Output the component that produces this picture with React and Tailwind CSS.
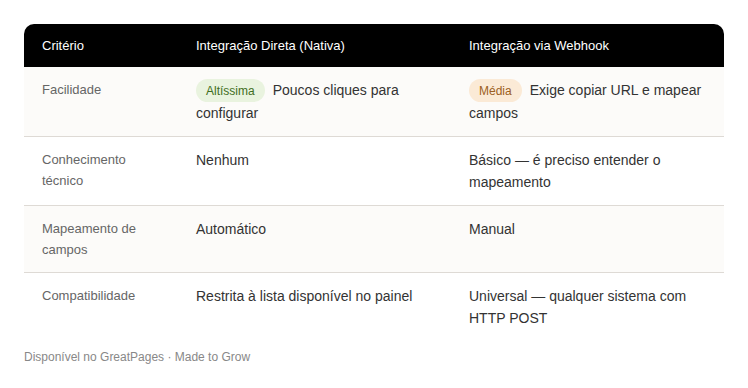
import React from "react";

const rows = [
  {
    label: "Facilidade",
    direct: { badge: "Altíssima", tone: "green", text: "Poucos cliques para configurar" },
    webhook: { badge: "Média", tone: "amber", text: "Exige copiar URL e mapear campos" },
  },
  { label: "Conhecimento técnico", direct: { text: "Nenhum" }, webhook: { text: "Básico — é preciso entender o mapeamento" } },
  { label: "Mapeamento de campos", direct: { text: "Automático" }, webhook: { text: "Manual" } },
  { label: "Compatibilidade", direct: { text: "Restrita à lista disponível no painel" }, webhook: { text: "Universal — qualquer sistema com HTTP POST" } },
];

function Badge({ tone, children }) {
  const cls =
    tone === "green"
      ? "bg-[#e9f3df] text-[#3f6e22]"
      : "bg-[#fbead6] text-[#9c5f22]";
  return (
    <span className={`mr-2 inline-block rounded-full px-[10px] pt-[2px] pb-px text-[12px] leading-[20px] align-top ${cls}`}>
      {children}
    </span>
  );
}

function Cell({ value }) {
  return (
    <div className="px-[18px] py-3 text-[14px] leading-[22px] text-[#333333]">
      {value.badge && <Badge tone={value.tone}>{value.badge}</Badge>}
      {value.text}
    </div>
  );
}

export default function App() {
  return (
    <div className="min-h-[388px] bg-white p-6 font-['Liberation_Sans',Arial,sans-serif]">
      <div className="overflow-hidden rounded-[10px]">
        <div className="grid grid-cols-[154px_273px_273px] bg-black text-[13px] leading-[21px] text-white">
          <div className="px-[18px] py-[11px]">Critério</div>
          <div className="px-[18px] py-[11px]">Integração Direta (Nativa)</div>
          <div className="px-[18px] py-[11px]">Integração via Webhook</div>
        </div>
        {rows.map((r, i) => (
          <div
            key={r.label}
            className={`grid grid-cols-[154px_273px_273px] ${i % 2 === 0 ? "bg-[#fcfbf9]" : "bg-white"} ${
              i < rows.length - 1 ? "border-b border-[#dedad5]" : ""
            }`}
          >
            <div className="px-[18px] py-3 pr-4 text-[13px] leading-[21px] text-[#666666]">{r.label}</div>
            <Cell value={r.direct} />
            <Cell value={r.webhook} />
          </div>
        ))}
      </div>
      <p className="mt-[7px] text-[12px] leading-[18px] text-[#888888]">
        Disponível no GreatPages · Made to Grow
      </p>
    </div>
  );
}
